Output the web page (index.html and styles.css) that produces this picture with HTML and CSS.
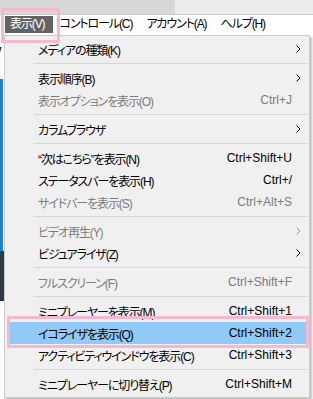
FILE: index.html
```html
<!DOCTYPE html>
<html lang="ja">
<head>
  <meta charset="UTF-8">
  <title>表示メニュー</title>
  <link rel="stylesheet" href="styles.css">
</head>
<body>
  <div class="titlebar">
    <div class="title-left"></div>
    <div class="title-right"></div>
  </div>

  <div class="menubar">
    <div class="menubar-item open">表示(V)</div>
    <div class="menubar-item">コントロール(C)</div>
    <div class="menubar-item">アカウント(A)</div>
    <div class="menubar-item">ヘルプ(H)</div>
  </div>

  <!-- app content behind the dropdown -->
  <div class="content">
    <div class="side">
      <span class="side-char">フ</span>
      <div class="side-blue"></div>
      <div class="side-dark"></div>
    </div>
  </div>

  <!-- dropdown menu -->
  <div class="dropdown">
    <div class="row"><span class="label">メディアの種類(K)</span><span class="key"></span><span class="sub"><svg width="5" height="8" viewBox="0 0 5 8"><path d="M0.5 0.5 L4 4 L0.5 7.5" fill="none" stroke="currentColor"/></svg></span></div>
    <div class="sep"></div>
    <div class="row"><span class="label">表示順序(B)</span><span class="key"></span><span class="sub"><svg width="5" height="8" viewBox="0 0 5 8"><path d="M0.5 0.5 L4 4 L0.5 7.5" fill="none" stroke="currentColor"/></svg></span></div>
    <div class="row disabled"><span class="label">表示オプションを表示(O)</span><span class="key">Ctrl+J</span><span class="sub"></span></div>
    <div class="sep"></div>
    <div class="row"><span class="label">カラムブラウザ</span><span class="key"></span><span class="sub"><svg width="5" height="8" viewBox="0 0 5 8"><path d="M0.5 0.5 L4 4 L0.5 7.5" fill="none" stroke="currentColor"/></svg></span></div>
    <div class="sep"></div>
    <div class="row"><span class="label">“次はこちら”を表示(N)</span><span class="key">Ctrl+Shift+U</span><span class="sub"></span></div>
    <div class="row"><span class="label">ステータスバーを表示(H)</span><span class="key">Ctrl+/</span><span class="sub"></span></div>
    <div class="row disabled"><span class="label">サイドバーを表示(S)</span><span class="key">Ctrl+Alt+S</span><span class="sub"></span></div>
    <div class="sep"></div>
    <div class="row disabled"><span class="label">ビデオ再生(Y)</span><span class="key"></span><span class="sub"><svg width="5" height="8" viewBox="0 0 5 8"><path d="M0.5 0.5 L4 4 L0.5 7.5" fill="none" stroke="currentColor"/></svg></span></div>
    <div class="row"><span class="label">ビジュアライザ(Z)</span><span class="key"></span><span class="sub"><svg width="5" height="8" viewBox="0 0 5 8"><path d="M0.5 0.5 L4 4 L0.5 7.5" fill="none" stroke="currentColor"/></svg></span></div>
    <div class="sep"></div>
    <div class="row disabled"><span class="label">フルスクリーン(F)</span><span class="key">Ctrl+Shift+F</span><span class="sub"></span></div>
    <div class="sep"></div>
    <div class="row"><span class="label">ミニプレーヤーを表示(M)</span><span class="key">Ctrl+Shift+1</span><span class="sub"></span></div>
    <div class="row hover"><span class="label">イコライザを表示(Q)</span><span class="key">Ctrl+Shift+2</span><span class="sub"></span></div>
    <div class="row"><span class="label">アクティビティウインドウを表示(C)</span><span class="key">Ctrl+Shift+3</span><span class="sub"></span></div>
    <div class="sep"></div>
    <div class="row"><span class="label">ミニプレーヤーに切り替え(P)</span><span class="key">Ctrl+Shift+M</span><span class="sub"></span></div>
  </div>

  <!-- pink annotation frames -->
  <div class="mark mark-menu"></div>
  <div class="mark mark-row"></div>
</body>
</html>
```

FILE: styles.css
```css
body {
  margin: 0;
  width: 313px;
  height: 399px;
  overflow: hidden;
  position: relative;
  background: #ffffff;
  font-family: "Liberation Sans", "Noto Sans CJK JP", sans-serif;
  font-size: 12px;
  font-feature-settings: "palt";
  color: #000;
}
/* window title strip */
.titlebar {
  display: flex;
  height: 14px;
  border-bottom: 1px solid #c9c9c9;
}
.title-left {
  width: 175px;
  background: #d8d8d8;
}
.title-right {
  flex: 1;
  background: #ececec;
}
/* menu bar */
.menubar {
  display: flex;
  height: 20px;
  padding: 1px 0 0 5px;
  background: #ffffff;
  box-sizing: border-box;
}
.menubar-item {
  height: 17px;
  line-height: 17px;
  padding: 0 7px;
  white-space: nowrap;
  letter-spacing: -1.1px;
}
.menubar-item.open {
  background: #636363;
  color: #fff;
  padding: 0 8px 0 5px;
}
/* content behind */
.content {
  height: 364px;
}
.side {
  width: 4px;
  height: 100%;
  position: relative;
  overflow: hidden;
}
.side-char {
  position: absolute;
  left: -8px;
  top: 7px;
  font-size: 12px;
}
.side-blue {
  position: absolute;
  top: 44px;
  left: 0;
  width: 3px;
  height: 172px;
  background: #1c7fd2;
}
.side-dark {
  position: absolute;
  top: 216px;
  left: 0;
  width: 4px;
  height: 50px;
  background: #2d3a48;
}
/* dropdown */
.dropdown {
  position: absolute;
  left: 4px;
  top: 35px;
  width: 306px;
  box-sizing: border-box;
  padding: 2px 3px 2px 4px;
  background: #f0f0f0;
  border: 1px solid #cccccc;
  box-shadow: 2px 2px 2px rgba(0, 0, 0, 0.25);
}
.row {
  display: flex;
  align-items: center;
  height: 22px;
  padding-left: 29px;
  white-space: nowrap;
}
.label {
  flex: 1;
  letter-spacing: -1.1px;
}
.key {
  text-align: right;
}
.sub {
  width: 14px;
  display: flex;
  align-items: center;
  padding-left: 4px;
  box-sizing: border-box;
}
.row.disabled {
  color: #7c7c7c;
}
.row.disabled .sub {
  color: #9a9a9a;
}
.row.hover {
  background: #91c9f7;
}
.sep {
  height: 1px;
  margin: 3px -2px 3px 25px;
  background: #d7d7d7;
}
/* pink annotation frames */
.mark {
  position: absolute;
  border: 3px solid #f6b7d0;
  box-sizing: border-box;
}
.mark-menu {
  left: 1px;
  top: 8px;
  width: 59px;
  height: 35px;
}
.mark-row {
  left: 7px;
  top: 316px;
  width: 302px;
  height: 32px;
}
```
